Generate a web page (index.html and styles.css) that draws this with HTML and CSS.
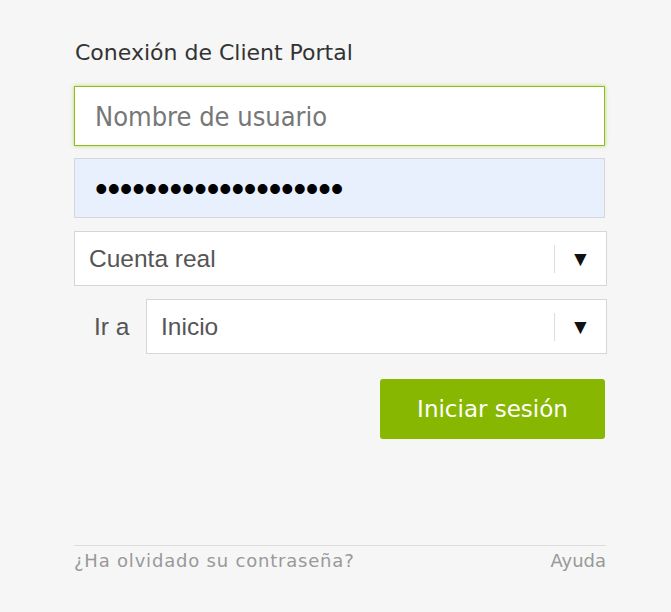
FILE: index.html
```html
<!DOCTYPE html>
<html lang="es">
<head>
<meta charset="utf-8">
<title>Conexión de Client Portal</title>
<link rel="stylesheet" href="styles.css">
</head>
<body>
<div class="login">
  <h1 class="title">Conexión de Client Portal</h1>
  <div class="field field-user"><span class="placeholder">Nombre de usuario</span></div>
  <div class="field field-pass"><span class="dots">••••••••••••••••••••</span></div>
  <div class="select select-full">
    <span class="select-text">Cuenta real</span>
    <span class="select-sep"></span>
    <span class="select-arrow">▼</span>
  </div>
  <div class="goto-row">
    <span class="goto-label">Ir a</span>
    <div class="select select-goto">
      <span class="select-text">Inicio</span>
      <span class="select-sep"></span>
      <span class="select-arrow">▼</span>
    </div>
  </div>
  <div class="actions">
    <button class="btn">Iniciar sesión</button>
  </div>
  <div class="footer">
    <span class="forgot">¿Ha olvidado su contraseña?</span>
    <span class="help">Ayuda</span>
  </div>
</div>
</body>
</html>
```
FILE: styles.css
```css
html, body {
  margin: 0;
  padding: 0;
  background: #f6f6f6;
}
body {
  font-family: "DejaVu Sans Condensed", "DejaVu Sans", sans-serif;
}
.login {
  width: 533px;
  margin-left: 74px;
  padding-top: 38px;
  display: flex;
  flex-direction: column;
}
.title {
  margin: 0 0 0 1px;
  font-family: "DejaVu Sans", sans-serif;
  font-size: 22px;
  font-weight: normal;
  color: #333;
  line-height: 30px;
}
.field {
  box-sizing: border-box;
  width: 531px;
  height: 60px;
  display: flex;
  align-items: center;
  padding-left: 20px;
}
.field-user {
  margin-top: 18px;
  background: #fff;
  border: 1px solid #8fbe1e;
  box-shadow: 0 0 4px rgba(143, 195, 30, 0.6);
}
.placeholder {
  font-size: 27px;
  color: #777;
}
.field-pass {
  margin-top: 12px;
  background: #e8f0fd;
  border: 1px solid #d3d6da;
}
.dots {
  font-family: "Liberation Sans", Arial, sans-serif;
  font-size: 36px;
  line-height: 40px;
  letter-spacing: -0.2px;
  color: #000;
  margin-top: 2px;
}
.select {
  box-sizing: border-box;
  height: 55px;
  background: #fff;
  border: 1px solid #d6d6d6;
  display: flex;
  align-items: center;
  font-family: "Liberation Sans", Arial, sans-serif;
}
.select-full {
  margin-top: 13px;
  width: 533px;
  padding-left: 14px;
}
.select-text {
  flex: 1;
  font-size: 24.5px;
  color: #555;
}
.select-sep {
  width: 1px;
  height: 28px;
  background: #ddd;
}
.select-arrow {
  width: 51px;
  text-align: center;
  font-size: 21px;
  color: #111;
}
.goto-row {
  margin-top: 13px;
  display: flex;
  align-items: center;
}
.goto-label {
  width: 72px;
  box-sizing: border-box;
  padding-left: 20px;
  font-family: "Liberation Sans", Arial, sans-serif;
  font-size: 24.5px;
  color: #555;
}
.select-goto {
  flex: 1;
  padding-left: 14px;
}
.actions {
  margin-top: 25px;
  width: 531px;
  display: flex;
  justify-content: flex-end;
}
.btn {
  width: 225px;
  height: 60px;
  border: none;
  border-radius: 3px;
  background: #87b700;
  color: #fff;
  font-family: "DejaVu Sans", sans-serif;
  font-size: 23px;
  cursor: pointer;
}
.footer {
  margin-top: 106px;
  width: 532px;
  border-top: 1px solid #ddd;
  padding-top: 4px;
  display: flex;
  justify-content: space-between;
  font-family: "DejaVu Sans", sans-serif;
  font-size: 18px;
  color: #999;
}
.forgot {
  letter-spacing: 0.8px;
}
```
